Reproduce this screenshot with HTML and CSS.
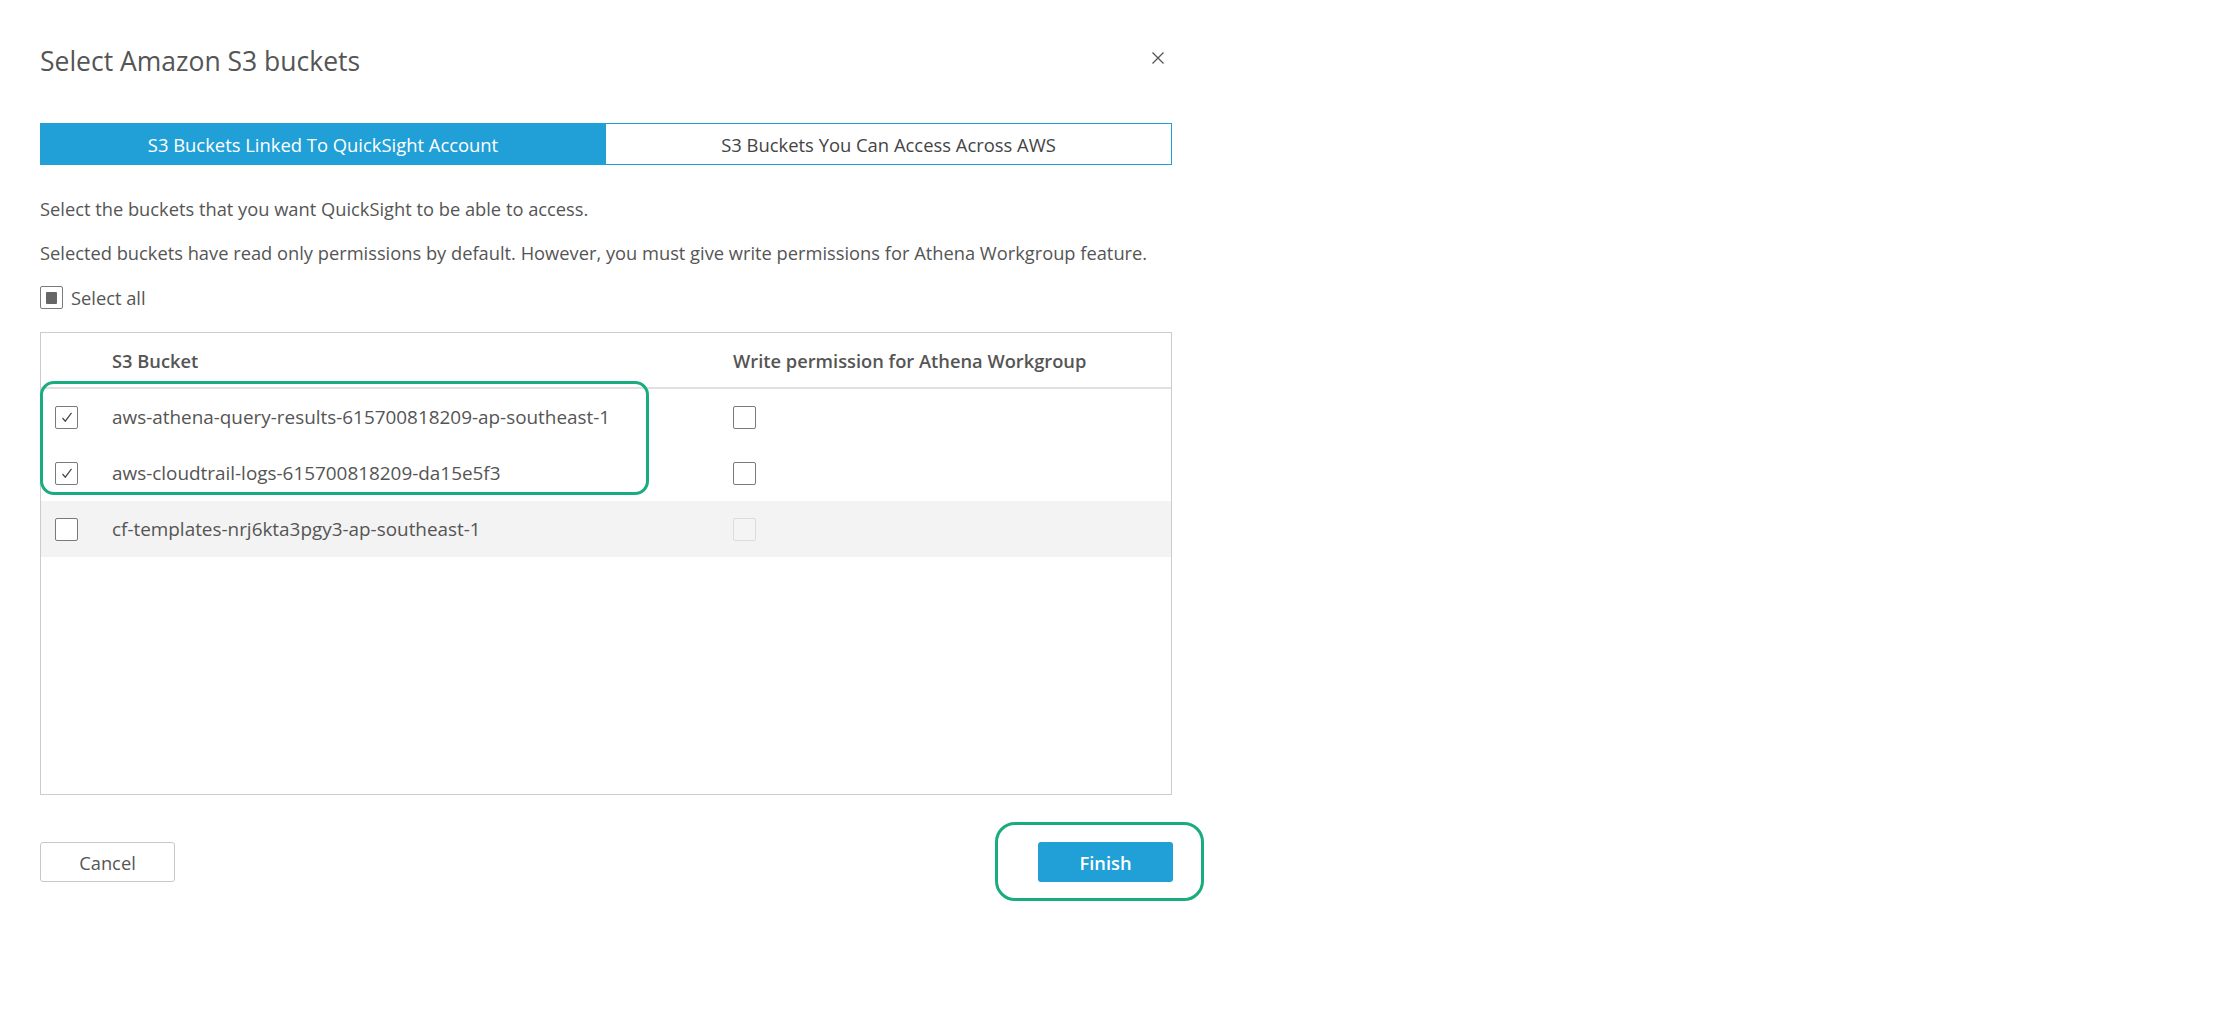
FILE: index.html
```html
<!DOCTYPE html>
<html lang="en">
<head>
<meta charset="utf-8">
<title>Select Amazon S3 buckets</title>
<link rel="stylesheet" href="styles.css">
</head>
<body>
<div class="dialog">
  <div class="head">
    <h1 class="title">Select Amazon S3 buckets</h1>
    <button class="close" aria-label="Close">
      <svg width="12" height="12" viewBox="0 0 12 12"><path d="M0.5 0.5L11.5 11.5M11.5 0.5L0.5 11.5" stroke="#555" stroke-width="1.3" fill="none"/></svg>
    </button>
  </div>

  <div class="tabs">
    <div class="tab active">S3 Buckets Linked To QuickSight Account</div>
    <div class="tab">S3 Buckets You Can Access Across AWS</div>
  </div>

  <p class="text first">Select the buckets that you want QuickSight to be able to access.</p>
  <p class="text">Selected buckets have read only permissions by default. However, you must give write permissions for Athena Workgroup feature.</p>

  <label class="select-all">
    <span class="cb partial"><span class="dot"></span></span>
    <span>Select all</span>
  </label>

  <div class="table">
    <div class="row header">
      <div class="c1"></div>
      <div class="c2">S3 Bucket</div>
      <div class="c3">Write permission for Athena Workgroup</div>
    </div>
    <div class="row">
      <div class="c1"><span class="cb checked"><svg width="14" height="14" viewBox="0 0 14 14"><path d="M2.5 8L5.3 11.2L11.5 2.8" stroke="#444" stroke-width="1.2" fill="none"/></svg></span></div>
      <div class="c2">aws-athena-query-results-615700818209-ap-southeast-1</div>
      <div class="c3"><span class="cb"></span></div>
    </div>
    <div class="row">
      <div class="c1"><span class="cb checked"><svg width="14" height="14" viewBox="0 0 14 14"><path d="M2.5 8L5.3 11.2L11.5 2.8" stroke="#444" stroke-width="1.2" fill="none"/></svg></span></div>
      <div class="c2">aws-cloudtrail-logs-615700818209-da15e5f3</div>
      <div class="c3"><span class="cb"></span></div>
    </div>
    <div class="row shaded">
      <div class="c1"><span class="cb"></span></div>
      <div class="c2">cf-templates-nrj6kta3pgy3-ap-southeast-1</div>
      <div class="c3"><span class="cb disabled"></span></div>
    </div>
  </div>

  <div class="actions">
    <button class="btn cancel">Cancel</button>
    <button class="btn finish">Finish</button>
  </div>

  <div class="mark mark-rows"></div>
  <div class="mark mark-finish"></div>
</div>
</body>
</html>
```
FILE: styles.css
```css
* { box-sizing: border-box; }
html, body { margin: 0; padding: 0; background: #fff; }
body {
  font-family: "Open Sans", "Lato", sans-serif;
  color: #555;
  font-size: 18.3px;
}
.dialog {
  position: relative;
  width: 1172px;
  min-height: 1000px;
  padding: 43px 0 0 40px;
}
.head {
  display: flex;
  justify-content: space-between;
  align-items: center;
  height: 36px;
}
.title {
  margin: 0;
  font-size: 26.5px;
  font-weight: 400;
  line-height: 36px;
  color: #555;
}
.close {
  border: 0;
  background: none;
  padding: 0;
  margin: -6px 8px 0 0;
  width: 12px;
  height: 12px;
  display: flex;
}
.tabs {
  display: flex;
  margin-top: 44px;
  height: 42px;
}
.tab {
  flex: 0 0 566px;
  display: flex;
  align-items: center;
  justify-content: center;
  font-size: 18.4px;
  color: #444;
  border: 1px solid #219fd7;
}
.tab.active {
  background: #219fd7;
  color: #fff;
}
.tab + .tab {
  flex: 1 1 auto;
  border-left: 0;
}
.text {
  margin: 20px 0 0;
  line-height: 24px;
}
.text.first { margin-top: 32px; }
.select-all {
  display: flex;
  align-items: center;
  gap: 8px;
  margin-top: 21px;
  height: 23px;
}
.cb {
  width: 23px;
  height: 23px;
  border: 1px solid #7a7a7a;
  border-radius: 2px;
  display: inline-flex;
  align-items: center;
  justify-content: center;
  background: #fff;
  flex: 0 0 auto;
}
.cb.disabled { border-color: #dcdcdc; background: #f4f4f4; }
.cb .dot {
  width: 11px;
  height: 12px;
  background: #666;
  border-radius: 1px;
}
.table {
  margin-top: 23px;
  height: 463px;
  border: 1px solid #cccccc;
}
.row {
  display: grid;
  grid-template-columns: 71px 621px 1fr;
  align-items: center;
  height: 56px;
  font-size: 18.9px;
}
.row.header {
  height: 56px;
  border-bottom: 2px solid #e0e0e0;
  font-weight: 600;
  font-size: 18.3px;
  color: #555;
}
.row.shaded { background: #f3f3f3; }
.c1 { padding-left: 14px; display: flex; }
.c3 { display: flex; }
.actions {
  display: flex;
  justify-content: space-between;
  margin-top: 47px;
  width: 1133px;
}
.btn {
  width: 135px;
  height: 40px;
  border-radius: 3px;
  font-family: inherit;
  font-size: 18.3px;
  cursor: pointer;
}
.cancel {
  background: #fff;
  border: 1px solid #c8c8c8;
  color: #555;
}
.finish {
  background: #219fd7;
  border: 0;
  color: #fff;
  font-weight: 600;
}
.mark {
  position: absolute;
  border: 3px solid #18ac7e;
  pointer-events: none;
}
.mark-rows {
  left: 40px;
  top: 381px;
  width: 609px;
  height: 114px;
  border-radius: 14px;
}
.mark-finish {
  left: 995px;
  top: 822px;
  width: 209px;
  height: 79px;
  border-radius: 20px;
}
```
